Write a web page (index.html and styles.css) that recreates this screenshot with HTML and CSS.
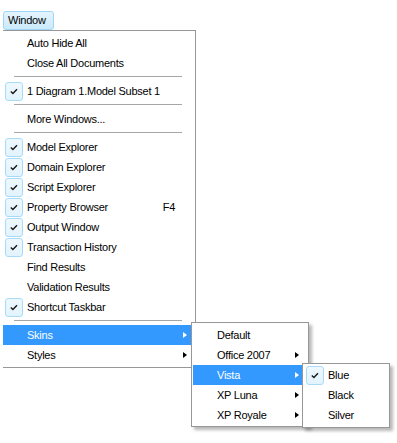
FILE: index.html
```html
<!DOCTYPE html>
<html>
<head>
<meta charset="utf-8">
<link rel="stylesheet" href="styles.css">
</head>
<body>
<div class="screen">
  <div class="menubar"><span class="menu-btn">Window</span></div>
  <div class="menu main">
    <div class="item"><span class="icon"></span><span class="label">Auto Hide All</span></div>
    <div class="item"><span class="icon"></span><span class="label">Close All Documents</span></div>
    <div class="sep"></div>
    <div class="item"><span class="icon"><span class="check"><svg width="8" height="7" viewBox="0 0 8 7"><path d="M0.8 3.6 L2.9 5.6 L7 1.2" fill="none" stroke="#1a1a1a" stroke-width="1.4"/></svg></span></span><span class="label">1 Diagram 1.Model Subset 1</span></div>
    <div class="sep"></div>
    <div class="item"><span class="icon"></span><span class="label">More Windows...</span></div>
    <div class="sep"></div>
    <div class="item"><span class="icon"><span class="check"><svg width="8" height="7" viewBox="0 0 8 7"><path d="M0.8 3.6 L2.9 5.6 L7 1.2" fill="none" stroke="#1a1a1a" stroke-width="1.4"/></svg></span></span><span class="label">Model Explorer</span></div>
    <div class="item"><span class="icon"><span class="check"><svg width="8" height="7" viewBox="0 0 8 7"><path d="M0.8 3.6 L2.9 5.6 L7 1.2" fill="none" stroke="#1a1a1a" stroke-width="1.4"/></svg></span></span><span class="label">Domain Explorer</span></div>
    <div class="item"><span class="icon"><span class="check"><svg width="8" height="7" viewBox="0 0 8 7"><path d="M0.8 3.6 L2.9 5.6 L7 1.2" fill="none" stroke="#1a1a1a" stroke-width="1.4"/></svg></span></span><span class="label">Script Explorer</span></div>
    <div class="item"><span class="icon"><span class="check"><svg width="8" height="7" viewBox="0 0 8 7"><path d="M0.8 3.6 L2.9 5.6 L7 1.2" fill="none" stroke="#1a1a1a" stroke-width="1.4"/></svg></span></span><span class="label">Property Browser</span><span class="shortcut">F4</span></div>
    <div class="item"><span class="icon"><span class="check"><svg width="8" height="7" viewBox="0 0 8 7"><path d="M0.8 3.6 L2.9 5.6 L7 1.2" fill="none" stroke="#1a1a1a" stroke-width="1.4"/></svg></span></span><span class="label">Output Window</span></div>
    <div class="item"><span class="icon"><span class="check"><svg width="8" height="7" viewBox="0 0 8 7"><path d="M0.8 3.6 L2.9 5.6 L7 1.2" fill="none" stroke="#1a1a1a" stroke-width="1.4"/></svg></span></span><span class="label">Transaction History</span></div>
    <div class="item"><span class="icon"></span><span class="label">Find Results</span></div>
    <div class="item"><span class="icon"></span><span class="label">Validation Results</span></div>
    <div class="item"><span class="icon"><span class="check"><svg width="8" height="7" viewBox="0 0 8 7"><path d="M0.8 3.6 L2.9 5.6 L7 1.2" fill="none" stroke="#1a1a1a" stroke-width="1.4"/></svg></span></span><span class="label">Shortcut Taskbar</span></div>
    <div class="sep"></div>
    <div class="item active"><span class="icon"></span><span class="label">Skins</span><span class="shortcut"></span><span class="sub-col"><span class="arrow"></span></span>
      <div class="menu sub sub1">
        <div class="item"><span class="icon"></span><span class="label">Default</span><span class="sub-col"></span></div>
        <div class="item"><span class="icon"></span><span class="label">Office 2007</span><span class="sub-col"><span class="arrow"></span></span></div>
        <div class="item active"><span class="icon"></span><span class="label">Vista</span><span class="sub-col"><span class="arrow"></span></span>
          <div class="menu sub sub2">
            <div class="item"><span class="icon"><span class="check"><svg width="8" height="7" viewBox="0 0 8 7"><path d="M0.8 3.6 L2.9 5.6 L7 1.2" fill="none" stroke="#1a1a1a" stroke-width="1.4"/></svg></span></span><span class="label">Blue</span></div>
            <div class="item"><span class="icon"></span><span class="label">Black</span></div>
            <div class="item"><span class="icon"></span><span class="label">Silver</span></div>
          </div>
        </div>
        <div class="item"><span class="icon"></span><span class="label">XP Luna</span><span class="sub-col"><span class="arrow"></span></span></div>
        <div class="item"><span class="icon"></span><span class="label">XP Royale</span><span class="sub-col"><span class="arrow"></span></span></div>
      </div>
    </div>
    <div class="item"><span class="icon"></span><span class="label">Styles</span><span class="shortcut"></span><span class="sub-col"><span class="arrow"></span></span></div>
  </div>
</div>
</body>
</html>
```

FILE: styles.css
```css
html, body {
  margin: 0;
  padding: 0;
  background: #ffffff;
}

body {
  font-family: "Liberation Sans", Arial, sans-serif;
  font-size: 11px;
  letter-spacing: -0.25px;
  color: #000000;
}

.screen {
  padding-top: 11px;
  padding-left: 3px;
  width: 394px;
  height: 432px;
  overflow: hidden;
}

.menubar {
  height: 19px;
  display: flex;
}

.menu-btn {
  box-sizing: border-box;
  width: 51px;
  height: 19px;
  padding-left: 4px;
  line-height: 17px;
  border: 1px solid #9fd6f7;
  border-radius: 3px;
  background: linear-gradient(#e4f4fd, #cbeafc);
}

.menu {
  background: #ffffff;
}

.main {
  width: 192px;
  border-top: 1px solid #979797;
  border-right: 1px solid #979797;
  border-bottom: 1px solid #979797;
  padding-top: 2px;
  padding-bottom: 2px;
}

.item {
  position: relative;
  height: 20px;
  display: grid;
  grid-template-columns: 24px 1fr auto 20px;
  align-items: center;
  white-space: nowrap;
}

.sub .item {
  grid-template-columns: 24px 1fr 20px;
}

.icon {
  height: 20px;
  display: flex;
  align-items: center;
}

.check {
  box-sizing: border-box;
  margin-left: 2px;
  width: 18px;
  height: 19px;
  border: 1px solid #a9dbf8;
  border-radius: 3px;
  background: linear-gradient(#eef8fe, #e2f3fd);
  display: flex;
  align-items: center;
  justify-content: center;
}

.check svg {
  display: block;
}

.label {
  line-height: 20px;
}

.shortcut {
  line-height: 20px;
}

.sub-col {
  display: flex;
  align-items: center;
  height: 20px;
}

.arrow {
  margin-left: 8px;
  width: 0;
  height: 0;
  border-top: 3.5px solid transparent;
  border-bottom: 3.5px solid transparent;
  border-left: 4px solid #000000;
}

.item.active {
  background: #3399ff;
  color: #ffffff;
}

.item.active > .sub-col > .arrow {
  border-left-color: #ffffff;
}

.sub .item:not(.active) {
  color: #000000;
}

.sub .item:not(.active) .arrow {
  border-left-color: #000000;
}

.sep {
  height: 8px;
  margin-left: 11px;
  margin-right: 13px;
  background: linear-gradient(transparent 3px, #a6a6a6 3px, #a6a6a6 4px, transparent 4px);
}

.sub {
  position: absolute;
  z-index: 10;
  border: 1px solid #979797;
  padding: 2px 1px 1px 1px;
  box-shadow: 3px 3px 3px rgba(0, 0, 0, 0.28);
  color: #000000;
}

.sub1 {
  top: -3px;
  left: 188px;
  width: 114px;
}

.sub2 {
  top: -2px;
  left: 109px;
  width: 84px;
  padding-top: 1px;
  padding-bottom: 2px;
}
```
